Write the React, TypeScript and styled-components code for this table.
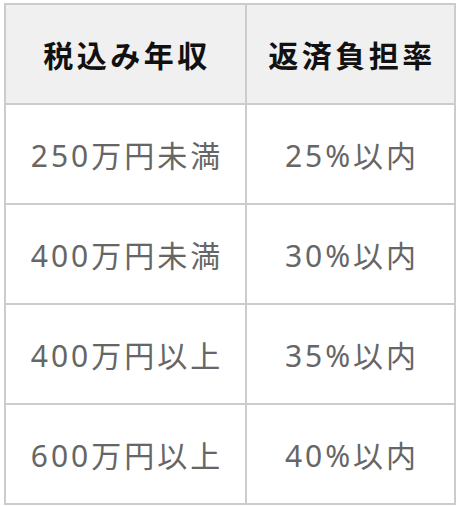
import styled, { createGlobalStyle } from 'styled-components';

const GlobalStyle = createGlobalStyle`
  body {
    margin: 0;
    padding: 3px 4px;
    background: #fff;
    font-family: 'Noto Sans', 'Noto Sans CJK JP', sans-serif;
  }
`;

const rows = [
  { income: '250万円未満', rate: '25%以内' },
  { income: '400万円未満', rate: '30%以内' },
  { income: '400万円以上', rate: '35%以内' },
  { income: '600万円以上', rate: '40%以内' },
];

export default function App() {
  return (
    <>
      <GlobalStyle />
      <Table>
        <colgroup>
          <col style={{ width: 241 }} />
          <col />
        </colgroup>
        <thead>
          <tr>
            <HeadCell>税込み年収</HeadCell>
            <HeadCell>返済負担率</HeadCell>
          </tr>
        </thead>
        <tbody>
          {rows.map(({ income, rate }) => (
            <tr key={income + rate}>
              <Cell>{income}</Cell>
              <Cell>{rate}</Cell>
            </tr>
          ))}
        </tbody>
      </Table>
    </>
  );
}

const Table = styled.table`
  width: 452px;
  border-collapse: collapse;
  table-layout: fixed;
  border: 2px solid #cccccc;
`;

const HeadCell = styled.th`
  height: 98px;
  padding: 0 0 0 3px;
  border: 2px solid #cccccc;
  background-color: #f0f0f0;
  color: #111;
  font-size: 30px;
  font-weight: 700;
  letter-spacing: 3.5px;
  text-align: center;
  vertical-align: middle;
`;

const Cell = styled.td`
  height: 98px;
  padding: 0 0 0 3px;
  border: 2px solid #cccccc;
  color: #666666;
  font-size: 30px;
  font-weight: 400;
  letter-spacing: 3px;
  text-align: center;
  vertical-align: middle;
`;
